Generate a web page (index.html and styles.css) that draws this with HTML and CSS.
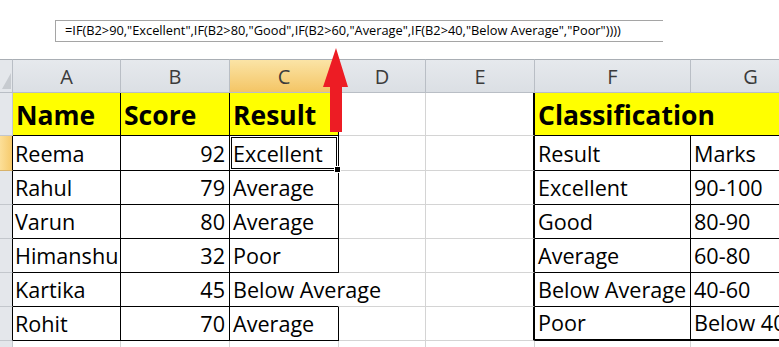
FILE: index.html
```html
<!DOCTYPE HTML>
<html lang="en">
<head>
<meta charset="utf-8">
<title>IF formula grading</title>
<link rel="stylesheet" href="styles.css">
</head>
<body>
<div class="bar">
  <div class="formula">=IF(B2&gt;90,"Excellent",IF(B2&gt;80,"Good",IF(B2&gt;60,"Average",IF(B2&gt;40,"Below Average","Poor"))))</div>
</div>
<div class="sheet">
  <div class="c hd corner"></div>
  <div class="c hd">A</div>
  <div class="c hd">B</div>
  <div class="c hd hl">C</div>
  <div class="c hd">D</div>
  <div class="c hd">E</div>
  <div class="c hd">F</div>
  <div class="c hd">G</div>

  <div class="c rh"></div>
  <div class="c bx yel bold">Name</div>
  <div class="c bx yel bold">Score</div>
  <div class="c bx yel bold">Result</div>
  <div class="c"></div>
  <div class="c edge"></div>
  <div class="c bx yel bold wide">Classification</div>

  <div class="c rh rh-on"></div>
  <div class="c bx first">Reema</div>
  <div class="c bx num">92</div>
  <div class="c bx sel">Excellent<span class="handle"></span></div>
  <div class="c"></div>
  <div class="c edge"></div>
  <div class="c bx">Result</div>
  <div class="c bx">Marks</div>

  <div class="c rh rh-b"></div>
  <div class="c bx first">Rahul</div>
  <div class="c bx num">79</div>
  <div class="c bx">Average</div>
  <div class="c"></div>
  <div class="c edge"></div>
  <div class="c bx">Excellent</div>
  <div class="c bx">90-100</div>

  <div class="c rh rh-b"></div>
  <div class="c bx first">Varun</div>
  <div class="c bx num">80</div>
  <div class="c bx">Average</div>
  <div class="c"></div>
  <div class="c edge"></div>
  <div class="c bx">Good</div>
  <div class="c bx">80-90</div>

  <div class="c rh rh-b"></div>
  <div class="c bx first">Himanshu</div>
  <div class="c bx num">32</div>
  <div class="c bx">Poor</div>
  <div class="c"></div>
  <div class="c edge"></div>
  <div class="c bx">Average</div>
  <div class="c bx">60-80</div>

  <div class="c rh rh-b"></div>
  <div class="c bx first">Kartika</div>
  <div class="c bx num">45</div>
  <div class="c bx spill">Below Average</div>
  <div class="c"></div>
  <div class="c edge"></div>
  <div class="c bx">Below Average</div>
  <div class="c bx">40-60</div>

  <div class="c rh rh-b"></div>
  <div class="c bx first">Rohit</div>
  <div class="c bx num">70</div>
  <div class="c bx">Average</div>
  <div class="c"></div>
  <div class="c edge"></div>
  <div class="c bx foot">Poor</div>
  <div class="c bx foot">Below 40</div>

  <div class="c rh"></div>
  <div class="c"></div>
  <div class="c"></div>
  <div class="c"></div>
  <div class="c"></div>
  <div class="c edge-end"></div>
  <div class="c"></div>
  <div class="c"></div>

  <svg class="arrow" width="28" height="90" viewBox="0 0 28 90">
    <polygon points="14,2 26,41 20,41 20,86 8,86 8,41 1,41" fill="#ed1c24"/>
  </svg>
</div>
</body>
</html>
```

FILE: styles.css
```css
body {
  margin: 0;
  background: #fff;
  overflow: hidden;
  font-family: "Open Sans", "Liberation Sans", sans-serif;
}
.bar {
  height: 59px;
  box-sizing: border-box;
  padding: 20px 0 0 55px;
}
.formula {
  width: 608px;
  height: 22px;
  box-sizing: border-box;
  border: 1px solid #a5a5a5;
  border-right: none;
  padding-left: 9px;
  font-size: 12.8px;
  line-height: 19px;
  color: #000;
  white-space: nowrap;
}
.sheet {
  position: relative;
  display: grid;
  grid-template-columns: 13px 108px 109px 109px 87px 109px 156px 120px;
  grid-template-rows: 34px 43px 35px 34px 34px 34px 34px 34px 20px;
  width: 811px;
}
.c {
  box-sizing: border-box;
  border-right: 1px solid #d4d4d4;
  border-bottom: 1px solid #d4d4d4;
  display: flex;
  align-items: flex-end;
  padding: 0 4px 2px 3px;
  font-size: 21.6px;
  line-height: 28px;
  color: #000;
  white-space: nowrap;
  overflow: hidden;
}
.first {
  padding-left: 2px;
}
.hd {
  background: linear-gradient(#e6e9ed, #dbdfe4);
  border-top: 1px solid #a9aeb4;
  border-right-color: #b9bec5;
  border-bottom-color: #b9bec5;
  justify-content: center;
  color: #3b3b3b;
  font-size: 20px;
  line-height: 26px;
  padding: 0 0 2px 0;
}
.hl {
  background: linear-gradient(#fbe4a6, #f4c565);
  border-right-color: #d7b26a;
}
.corner {
  position: relative;
  background: #e4e7eb;
}
.corner::after {
  content: "";
  position: absolute;
  right: 1px;
  bottom: 3px;
  border-left: 9px solid transparent;
  border-bottom: 16px solid #c7cbd0;
}
.rh {
  background: #e4e7eb;
  border-right-color: #c3c7cc;
  border-bottom-color: #c3c7cc;
  padding: 0;
}
.rh-b {
  border-right-color: #000;
}
.rh-on {
  background: linear-gradient(90deg, #fcdf98, #f6ca6c);
  border-right-color: #000;
  border-bottom-color: #d7b26a;
}
.bx {
  border-right-color: #000;
  border-bottom-color: #000;
}
.yel {
  background: #ffff00;
}
.bold {
  font-weight: bold;
  font-size: 26.5px;
  line-height: 34px;
  padding-bottom: 3px;
}
.wide {
  grid-column: span 2;
}
.num {
  justify-content: flex-end;
}
.edge {
  border-right: 2px solid #000;
}
.edge-end {
  border-right: 1px solid #d4d4d4;
}
.foot {
  border-bottom: 2px solid #000;
}
.spill {
  overflow: visible;
  border-right-color: transparent;
}
.sel {
  position: relative;
  overflow: visible;
  box-shadow: inset 0 0 0 1px #fff, inset 0 0 0 2px #000;
}
.handle {
  position: absolute;
  right: -3px;
  bottom: -3px;
  width: 5px;
  height: 5px;
  background: #000;
  border: 1px solid #fff;
}
.arrow {
  position: absolute;
  left: 322px;
  top: -13px;
}
```
